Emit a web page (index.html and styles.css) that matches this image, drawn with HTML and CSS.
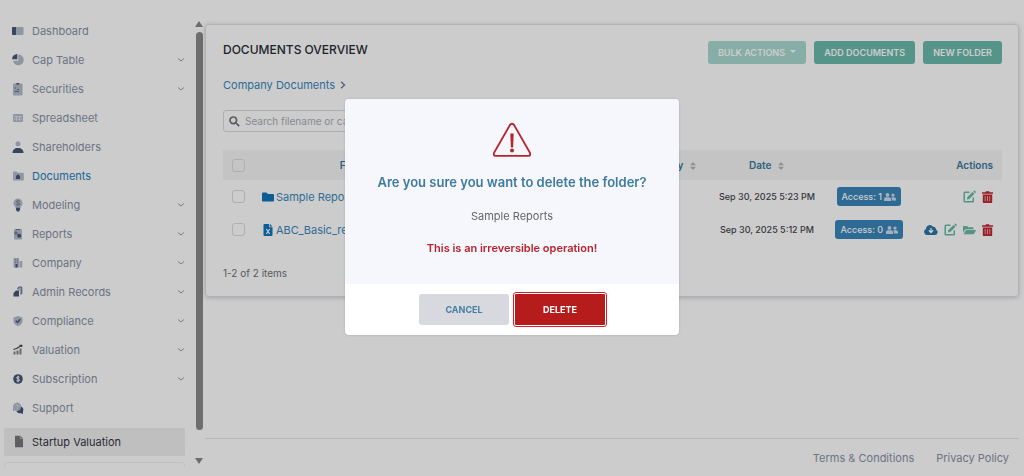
FILE: index.html
```html
<!DOCTYPE html>
<html lang="en">
<head>
    <meta charset="utf-8">
    <title>Documents Overview</title>
    <link rel="stylesheet" href="styles.css">
</head>
<body>
    <svg class="sprite" aria-hidden="true">
        <symbol id="chevron" viewBox="0 0 8 8"><path d="M1 2.500L4 5l3-2.500" fill="none" stroke="currentColor" stroke-width=".9"/></symbol>
        <symbol id="sort" viewBox="0 0 8 10"><path d="M4 1l3 3.200H1zM4 9L1 5.800h6z" fill="currentColor"/></symbol>
        <symbol id="users" viewBox="0 0 12 10"><path d="M3.500 1a1.900 1.900 0 1 1 0 3.800 1.900 1.900 0 0 1 0-3.800zM9 1.400a1.600 1.600 0 1 1 0 3.300 1.600 1.600 0 0 1 0-3.300zM0 9V7.300c0-1.200.9-2 2-2h3c1.100 0 2 .8 2 2V9zM7.800 8.600V7.300c0-.8-.3-1.500-.8-2h3c1.100 0 2 .8 2 2v1.300z" fill="currentColor"/></symbol>
        <symbol id="edit" viewBox="0 0 13 13"><path d="M6.500 2.200H2c-.5 0-.8.3-.8.8v8c0 .5.3.8.8.8h7.500c.5 0 .8-.3.8-.8V7.500" fill="none" stroke="currentColor" stroke-width="1.500"/><path d="M4 9.400l.4-2.300L9.600 1.900l1.900 1.900-5.200 5.200zM10.200 1.300l.6-.6c.3-.3.7-.3 1 0l.9.9c.3.3.3.700 0 1l-.6.600z" fill="currentColor"/></symbol>
        <symbol id="trash" viewBox="0 0 11 12"><path d="M0 1.200h3.300L4 .2h3l.7 1H11v1.500H0zM.8 3.500h9.400V11c0 .6-.4 1-1 1H1.800c-.6 0-1-.4-1-1z" fill="currentColor"/><path d="M3.200 5v5.300M5.500 5v5.300M7.800 5v5.300" stroke="#f3c4c6" stroke-width=".8"/></symbol>
    </svg>

    <div class="app">
        <aside class="sidebar">
            <nav class="menu">
                <a class="menu-item" href="#">
                    <svg class="menu-icon" viewBox="0 0 12 14"><path class="dark" d="M1 3h3v8H1a1 1 0 0 1-1-1V4a1 1 0 0 1 1-1z"/><path class="light" d="M4 3h6.500a1 1 0 0 1 1 1v6a1 1 0 0 1-1 1H4z"/></svg>
                    <span>Dashboard</span>
                </a>
                <a class="menu-item" href="#">
                    <svg class="menu-icon" viewBox="0 0 12 14"><path class="light" d="M6.300 7V1.500A5.400 5.400 0 1 1 1 7.700h5.300z"/><path class="dark" d="M5.300 6.200H0A5.300 5.300 0 0 1 5.300 1z"/></svg>
                    <span>Cap Table</span><svg class="chevron"><use href="#chevron"/></svg>
                </a>
                <a class="menu-item" href="#">
                    <svg class="menu-icon" viewBox="0 0 12 14"><rect class="light" x="1" y="1.500" width="9.500" height="12" rx="1"/><path class="dark" d="M4 2.500a1.700 1.700 0 0 1 3.500 0z"/><path class="line" d="M2.500 6h1.500M2.500 9.500H7M5 7.500h2"/></svg>
                    <span>Securities</span><svg class="chevron"><use href="#chevron"/></svg>
                </a>
                <a class="menu-item" href="#">
                    <svg class="menu-icon" viewBox="0 0 12 14"><rect class="light" x="1" y="3" width="10" height="8" rx="1"/><path class="grid-line" d="M2 5.500h8M2 8h8M4.500 5v5M7.500 5v5"/></svg>
                    <span>Spreadsheet</span>
                </a>
                <a class="menu-item" href="#">
                    <svg class="menu-icon" viewBox="0 0 12 14"><circle class="light" cx="6" cy="3.800" r="2.500"/><path class="dark" d="M.5 13c0-3 2-5 5.500-5s5.500 2 5.500 5z"/></svg>
                    <span>Shareholders</span>
                </a>
                <a class="menu-item active" href="#">
                    <svg class="menu-icon" viewBox="0 0 12 14"><path class="light" d="M1 2.500h3.500l1 1.200H11a.8.8 0 0 1 .8.800v7H1z"/><path class="dark" d="M4 7l2-1.800L8 7v3H4z"/></svg>
                    <span>Documents</span>
                </a>
                <a class="menu-item" href="#">
                    <svg class="menu-icon" viewBox="0 0 12 14"><path class="light" d="M6 .5A4.700 4.700 0 0 1 8.500 9v1.500h-5V9A4.700 4.700 0 0 1 6 .5z"/><path class="line" d="M7.800 3.300C6.500 2.300 4.300 2.800 4.500 4s3.100.8 3.100 2-2 1.500-3.400.6"/><path class="dark" d="M4 9.800h4v2l-1 1.700H5l-1-1.700z"/></svg>
                    <span>Modeling</span><svg class="chevron"><use href="#chevron"/></svg>
                </a>
                <a class="menu-item" href="#">
                    <svg class="menu-icon" viewBox="0 0 12 14"><rect class="light" x="2" y="2" width="8" height="10.500" rx="1"/><path class="line" d="M4 2.500h4M3 5h2v2H3z"/><circle class="dark" cx="7.200" cy="8.700" r="2"/></svg>
                    <span>Reports</span><svg class="chevron"><use href="#chevron"/></svg>
                </a>
                <a class="menu-item" href="#">
                    <svg class="menu-icon" viewBox="0 0 12 14"><path class="light" d="M1.500 2H7v9.500H1.500zM7.500 5h2.800v6.500H7.500z"/><path class="line" d="M3 4h.8M5 4h.8M3 6.500h.8M5 6.500h.8"/><path class="dark" d="M3.500 8h2v3.500h-2z"/></svg>
                    <span>Company</span><svg class="chevron"><use href="#chevron"/></svg>
                </a>
                <a class="menu-item" href="#">
                    <svg class="menu-icon" viewBox="0 0 12 14"><path class="light" d="M5 4l3-2.500 2 1V9L8 10.500V6z"/><path class="line" d="M5 3.500L7.500 2h2.300v7"/><path class="dark" d="M4 5.500h3v6H1.500V8z"/></svg>
                    <span>Admin Records</span><svg class="chevron"><use href="#chevron"/></svg>
                </a>
                <a class="menu-item" href="#">
                    <svg class="menu-icon" viewBox="0 0 12 14"><path class="light" d="M6 2l4.500 1.500V7c0 2.500-2 4.200-4.500 5.200C3.500 11.200 1.500 9.500 1.500 7V3.500z"/><path class="check" d="M3.800 6.800l1.700 1.700 2.800-3.200"/></svg>
                    <span>Compliance</span><svg class="chevron"><use href="#chevron"/></svg>
                </a>
                <a class="menu-item" href="#">
                    <svg class="menu-icon" viewBox="0 0 12 14"><path class="gray" d="M1.500 8.500h2v3h-2zM4.500 7.500h2v4h-2zM7.500 5.500h2v6h-2z"/><path class="trend" d="M1.500 6.500l3-1L9.500 2.500M7.500 2.500h2.200v1.500"/></svg>
                    <span>Valuation</span><svg class="chevron"><use href="#chevron"/></svg>
                </a>
                <a class="menu-item" href="#">
                    <svg class="menu-icon" viewBox="0 0 12 14"><circle class="dark" cx="6" cy="7" r="4.800"/><path class="dollar" d="M7.500 5.300C6.600 4.500 4.500 4.700 4.600 5.900s2.900.9 2.900 2.200-2 1.300-3.100.6M6 3.800v6.400"/></svg>
                    <span>Subscription</span><svg class="chevron"><use href="#chevron"/></svg>
                </a>
                <a class="menu-item" href="#">
                    <svg class="menu-icon" viewBox="0 0 12 14"><path class="dark" d="M9 5.500c2 .8 3 3 2 5V13l-2-.8c-2 .4-3.700-.4-4.500-1.700z"/><path class="light" d="M5 1.500a4.200 4.200 0 1 1-1.800 8L1 10.200V6a4.200 4.200 0 0 1 4-4.500z"/><path class="grid-line" d="M4 4.500c.3-1.200 2.400-1 2.300.3 0 .8-1.100.9-1.100 1.700M5.200 7.500v.8"/></svg>
                    <span>Support</span>
                </a>
            </nav>
            <a class="startup" href="#">
                <svg class="startup-icon" viewBox="0 0 12 14"><path d="M2.500 1.500H7L9.500 4v7.500h-7z"/><path class="fold" d="M7 1.500V4h2.500"/></svg>
                <span>Startup Valuation</span>
            </a>
            <div class="side-box"></div>
        </aside>

        <div class="scrollbar">
            <span class="arrow-up"></span>
            <span class="thumb"></span>
            <span class="arrow-down"></span>
        </div>

        <div class="content">
            <main class="card">
                <header class="card-header">
                    <h1>DOCUMENTS OVERVIEW</h1>
                    <div class="toolbar">
                        <button class="btn btn-bulk" disabled>BULK ACTIONS <span class="caret"></span></button>
                        <button class="btn">ADD DOCUMENTS</button>
                        <button class="btn">NEW FOLDER</button>
                    </div>
                </header>

                <div class="breadcrumb">
                    <a href="#">Company Documents</a>
                    <svg width="6" height="8" viewBox="0 0 6 8"><path d="M1 .8L4.500 4 1 7.200" fill="none" stroke="#737b88" stroke-width="1.400"/></svg>
                </div>

                <label class="search">
                    <svg width="11" height="11" viewBox="0 0 11 11"><circle cx="4.300" cy="4.300" r="3.300"/><path d="M6.800 6.800L10.200 10.200"/></svg>
                    <input type="text" placeholder="Search filename or category" aria-label="Search documents">
                </label>

                <table class="documents">
                    <colgroup>
                        <col class="col-check"><col><col><col class="col-date"><col class="col-access"><col class="col-actions">
                    </colgroup>
                    <thead>
                        <tr>
                            <th><input type="checkbox" aria-label="Select all"></th>
                            <th class="filename">File Name <svg class="sort"><use href="#sort"/></svg></th>
                            <th class="category">Category <svg class="sort"><use href="#sort"/></svg></th>
                            <th>Date <svg class="sort"><use href="#sort"/></svg></th>
                            <th></th>
                            <th class="actions">Actions</th>
                        </tr>
                    </thead>
                    <tbody>
                        <tr>
                            <td><input type="checkbox" aria-label="Select Sample Reports"></td>
                            <td class="name"><a href="#"><svg width="12" height="12" viewBox="0 0 12 12"><path d="M1 1.500h3.500L6 3h5a1 1 0 0 1 1 1v5.500a1 1 0 0 1-1 1H1a1 1 0 0 1-1-1v-7a1 1 0 0 1 1-1z"/></svg>Sample Reports</a></td>
                            <td></td>
                            <td class="date">Sep 30, 2025 5:23 PM</td>
                            <td><button class="access">Access: 1 <svg width="12" height="10"><use href="#users"/></svg></button></td>
                            <td class="actions">
                                <div class="icons">
                                    <button class="green" aria-label="Edit"><svg width="13" height="13"><use href="#edit"/></svg></button>
                                    <button class="red" aria-label="Delete"><svg width="11" height="12"><use href="#trash"/></svg></button>
                                </div>
                            </td>
                        </tr>
                        <tr>
                            <td><input type="checkbox" aria-label="Select file"></td>
                            <td class="name"><a href="#"><svg width="12" height="12" viewBox="0 0 12 12"><path d="M2.500 0h4.700v3.300h3.300V11a1 1 0 0 1-1 1h-7a1 1 0 0 1-1-1V1a1 1 0 0 1 1-1zM8 0l2.500 2.500H8z"/><path d="M4.300 5l3.400 5M7.700 5l-3.400 5" stroke="#fff" stroke-width="1.200"/></svg>ABC_Basic_report</a></td>
                            <td></td>
                            <td class="date">Sep 30, 2025 5:12 PM</td>
                            <td><button class="access">Access: 0 <svg width="12" height="10"><use href="#users"/></svg></button></td>
                            <td class="actions">
                                <div class="icons">
                                    <button class="blue" aria-label="Download"><svg width="14" height="12" viewBox="0 0 14 12"><path d="M3.300 11A3.200 3.200 0 0 1 2 4.900 3.800 3.800 0 0 1 9 2.800a2.400 2.400 0 0 1 2.800 2.800A2.800 2.800 0 0 1 11.200 11z" fill="currentColor"/><path d="M7 4v4M4.800 6.300L7 8.600l2.200-2.300" fill="none" stroke="#fff" stroke-width="1.300"/></svg></button>
                                    <button class="green" aria-label="Edit"><svg width="13" height="13"><use href="#edit"/></svg></button>
                                    <button class="green" aria-label="Move"><svg width="13" height="10" viewBox="0 0 13 10"><path d="M0 7.500V2c0-.6.4-1 1-1h3l1.300 1.300h4.200c.6 0 1 .4 1 1v.9H3.500c-.7 0-1.300.3-1.600.9zM.7 9l2-3.500c.2-.3.500-.5.9-.5h8.900c.4 0 .6.400.4.700l-1.900 3c-.2.400-.5.500-.9.500H1z" fill="currentColor"/></svg></button>
                                    <button class="red" aria-label="Delete"><svg width="11" height="12"><use href="#trash"/></svg></button>
                                </div>
                            </td>
                        </tr>
                    </tbody>
                </table>
                <p class="count">1-2 of 2 items</p>
            </main>

            <footer class="footer">
                <a href="#">Terms &amp; Conditions</a>
                <a href="#">Privacy Policy</a>
            </footer>
        </div>
    </div>

    <div class="overlay">
        <div class="dialog" role="dialog" aria-labelledby="dialog-title">
            <div class="dialog-body">
                <svg width="38" height="34" viewBox="0 0 38 34"><path d="M17 1.900a2.400 2.400 0 0 1 4 0l16 28c.8 1.500 0 3-1.800 3H2.800c-1.800 0-2.600-1.500-1.800-3z" fill="none" stroke="currentColor" stroke-width="1.900"/><path d="M17.300 10.500h3.400l-.6 14h-2.200z" fill="currentColor"/><circle cx="19" cy="27.500" r="2" fill="currentColor"/></svg>
                <h2 id="dialog-title">Are you sure you want to delete the folder?</h2>
                <p>Sample Reports</p>
                <p class="warning">This is an irreversible operation!</p>
            </div>
            <div class="dialog-footer">
                <button class="cancel">CANCEL</button>
                <button class="delete">DELETE</button>
            </div>
        </div>
    </div>
</body>
</html>
```
FILE: styles.css
```css
* {
    box-sizing: border-box;
}
body {
    margin: 0;
    background: #fff;
    color: #45474f;
    font-family: Inter, "Liberation Sans", sans-serif;
    font-size: 11px;
    line-height: 16px;
}
a {
    color: #3988bd;
    text-decoration: none;
}
button {
    font: inherit;
    border: 0;
    padding: 0;
}
.sprite {
    display: none;
}
.app {
    display: flex;
    height: 100vh;
    overflow: hidden;
}

/* sidebar */
.sidebar {
    flex: 0 0 193px;
    padding: 16px 8px 9px 4px;
    display: flex;
    flex-direction: column;
}
.menu-item {
    display: flex;
    align-items: center;
    height: 29px;
    padding: 0 0 0 8px;
    color: #8791a5;
}
.menu-item.active {
    color: #2582bd;
}
.menu-icon {
    width: 12px;
    height: 14px;
    margin-right: 8px;
}
.chevron {
    width: 8px;
    height: 8px;
    margin-left: auto;
}
.light {
    fill: #b5bcca;
}
.dark {
    fill: #465679;
}
.gray {
    fill: #85858a;
}
.line, .check, .trend, .dollar, .grid-line {
    fill: none;
    stroke: #626f8c;
}
.check {
    stroke: #465679;
    stroke-width: 1.5;
}
.trend {
    stroke: #47474b;
    stroke-width: 1.3;
}
.dollar {
    stroke: #fff;
}
.grid-line {
    stroke: #dde0e7;
}
.startup {
    display: flex;
    align-items: center;
    height: 28px;
    margin-top: 6px;
    padding-left: 8px;
    flex-shrink: 0;
    background: #efeff1;
    border-radius: 2px;
    color: #33353f;
}
.startup-icon {
    width: 14px;
    height: 16px;
    margin-right: 6px;
    fill: #77777a;
}
.startup-icon .fold {
    fill: none;
    stroke: #c8c8c8;
    stroke-width: .6;
}
.side-box {
    flex: 1;
    margin-top: 6px;
    border: 1px solid #f2f2f3;
    border-bottom: 0;
    border-radius: 3px 3px 0 0;
}
.scrollbar {
    flex: 0 0 11px;
    display: flex;
    flex-direction: column;
    align-items: center;
    padding: 21px 2px 12px;
}
.thumb {
    flex: 1;
    width: 7px;
    margin: 5px 0 28px;
    border-radius: 4px;
    background: #8a8a8a;
}
.arrow-up, .arrow-down {
    border: 4px solid transparent;
}
.arrow-up {
    border-top: 0;
    border-bottom: 6px solid #888;
}
.arrow-down {
    border-bottom: 0;
    border-top: 6px solid #888;
}

/* documents */
.content {
    flex: 1;
    display: flex;
    flex-direction: column;
    min-width: 0;
}
.card {
    margin: 24px 5px 0 0;
    padding: 16px 16px 15px 17px;
    border: 1px solid #e0e0e4;
    border-radius: 4px;
    box-shadow: 0 1px 4px rgba(80, 90, 130, 0.3);
}
.card-header {
    display: flex;
    justify-content: space-between;
}
h1 {
    margin: 0;
    font-size: 12px;
    line-height: 18px;
    font-weight: 500;
    color: #292c36;
}
.toolbar {
    display: flex;
    gap: 8px;
}
.btn {
    height: 23px;
    padding: 0 10px;
    border-radius: 3px;
    background: #6abaac;
    color: #fff;
    font-size: 9px;
    font-weight: 600;
}
.btn-bulk {
    background: #a8d9d0;
}
.caret {
    display: inline-block;
    margin: 0 0 3px 3px;
    border: 3px solid transparent;
    border-top-color: #fff;
    border-bottom: 0;
}
.breadcrumb {
    display: flex;
    align-items: center;
    gap: 5px;
    margin-top: 13px;
}
.search {
    display: flex;
    align-items: center;
    gap: 5px;
    width: 200px;
    height: 22px;
    margin-top: 17px;
    padding: 0 5px;
    border: 1px solid #d9dade;
    border-radius: 3px;
}
.search svg {
    flex-shrink: 0;
    fill: none;
    stroke: #74757c;
    stroke-width: 1.7;
}
.search input {
    flex: 1;
    min-width: 0;
    padding: 0;
    border: 0;
    background: none;
    font: inherit;
    font-size: 10px;
}
.search input::placeholder {
    color: #a9adb8;
}
.documents {
    width: 100%;
    margin-top: 18px;
    table-layout: fixed;
    border-collapse: collapse;
    font-size: 10px;
}
.col-check {
    width: 30px;
}
.col-date {
    width: 120px;
}
.col-access {
    width: 84px;
}
.col-actions {
    width: 91px;
}
th, td {
    height: 33px;
    padding: 0;
    text-align: center;
    white-space: nowrap;
}
th {
    height: 30px;
    background: #f5f6f7;
    color: #3b789f;
    font-size: 10px;
    font-weight: 600;
}
.filename {
    padding-left: 8px;
}
.category {
    padding-right: 10px;
    text-align: right;
}
.name {
    padding-left: 9px;
    text-align: left;
    font-size: 11px;
}
.name a {
    display: flex;
    align-items: center;
    gap: 2px;
}
.name svg {
    fill: #0f73bb;
}
.date {
    font-size: 9px;
    font-weight: 500;
}
.sort {
    width: 8px;
    height: 10px;
    margin-left: 3px;
    vertical-align: middle;
    color: #b3b3bb;
}
input[type="checkbox"] {
    appearance: none;
    display: block;
    width: 13px;
    height: 13px;
    margin: 0 0 0 9px;
    border: 1px solid #d9dbe2;
    border-radius: 3px;
}
.access {
    height: 19px;
    padding: 0 5px;
    border-radius: 3px;
    background: #3a86b9;
    color: #fff;
    font-size: 9px;
    font-weight: 500;
}
.access svg {
    vertical-align: middle;
    color: #cfddee;
}
.actions {
    padding-right: 9px;
    text-align: right;
}
.icons {
    display: flex;
    align-items: center;
    justify-content: flex-end;
    gap: 6px;
}
.icons button {
    display: flex;
    background: none;
}
.green {
    color: #68baa6;
}
.red {
    color: #be252e;
}
.blue {
    color: #2d73a5;
}
.count {
    margin: 19px 0 0;
    font-size: 10px;
    color: #707176;
}
.footer {
    display: flex;
    justify-content: flex-end;
    gap: 22px;
    margin: auto 5px 0 0;
    padding: 11px 10px 10px;
    border-top: 1px solid #e5e5e8;
}
.footer a {
    color: #8791a5;
}

/* confirm dialog */
.overlay {
    position: fixed;
    inset: 0;
    display: flex;
    align-items: flex-start;
    justify-content: center;
    padding-top: 99px;
    background: rgba(0, 0, 0, 0.2);
}
.dialog {
    width: 334px;
    border-radius: 4px;
    overflow: hidden;
    background: #fff;
    box-shadow: 0 0 3px rgba(0, 0, 0, 0.15);
}
.dialog-body {
    padding: 24px 16px 28px;
    background: #f5f7fc;
    color: #b9232b;
    text-align: center;
}
.dialog-body svg {
    display: block;
    margin: 0 auto;
}
h2 {
    margin: 17px 0 0;
    font-size: 13px;
    line-height: 16px;
    font-weight: 600;
    color: #3f7a9f;
}
.dialog-body p {
    margin: 18px 0 0;
    color: #64656b;
}
.dialog-body .warning {
    margin-top: 16px;
    color: #b9232b;
    font-weight: 600;
}
.dialog-footer {
    display: flex;
    justify-content: center;
    gap: 6px;
    padding: 10px;
}
.dialog-footer button {
    width: 90px;
    height: 31px;
    border-radius: 3px;
    font-size: 9px;
    font-weight: 700;
}
.cancel {
    background: #d7d9df;
    color: #4580a4;
}
.dialog-footer .delete {
    border-radius: 1px;
    background: #b71c1c;
    color: #fff;
    outline: 1px solid #d9202c;
    outline-offset: 1px;
}
```
